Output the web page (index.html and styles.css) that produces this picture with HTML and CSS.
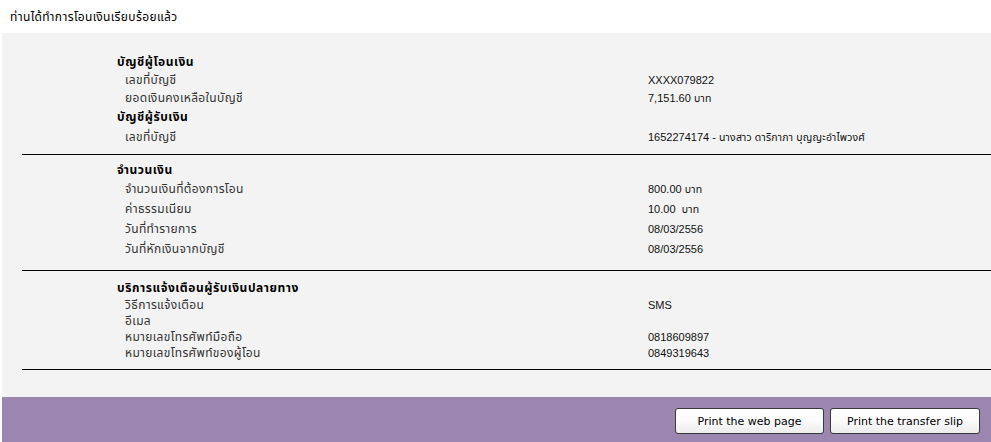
FILE: index.html
```html
<!DOCTYPE html>
<html lang="th">
<head>
<meta charset="utf-8">
<link rel="stylesheet" href="styles.css">
</head>
<body>
<div class="title">ท่านได้ทำการโอนเงินเรียบร้อยแล้ว</div>
<div class="panel">
  <section class="sec s1">
    <div class="row h18 head"><span class="lab">บัญชีผู้โอนเงิน</span></div>
    <div class="row h18"><span class="lab item">เลขที่บัญชี</span><span class="val">XXXX079822</span></div>
    <div class="row h18"><span class="lab item">ยอดเงินคงเหลือในบัญชี</span><span class="val">7,151.60 <span class="thai">บาท</span></span></div>
    <div class="row h20 head"><span class="lab">บัญชีผู้รับเงิน</span></div>
    <div class="row h20"><span class="lab item">เลขที่บัญชี</span><span class="val">1652274174 - <span class="thai">นางสาว ดาริกาภา บุญญะอำไพวงศ์</span></span></div>
  </section>
  <section class="sec s2">
    <div class="row h18 head"><span class="lab">จำนวนเงิน</span></div>
    <div class="row h20"><span class="lab item">จำนวนเงินที่ต้องการโอน</span><span class="val">800.00 <span class="thai">บาท</span></span></div>
    <div class="row h20"><span class="lab item">ค่าธรรมเนียม</span><span class="val">10.00&nbsp; <span class="thai">บาท</span></span></div>
    <div class="row h20"><span class="lab item">วันที่ทำรายการ</span><span class="val">08/03/2556</span></div>
    <div class="row h20"><span class="lab item">วันที่หักเงินจากบัญชี</span><span class="val">08/03/2556</span></div>
  </section>
  <section class="sec s3">
    <div class="row h17 head"><span class="lab">บริการแจ้งเตือนผู้รับเงินปลายทาง</span></div>
    <div class="row h17"><span class="lab item">วิธีการแจ้งเตือน</span><span class="val">SMS</span></div>
    <div class="row h16"><span class="lab item">อีเมล</span><span class="val"></span></div>
    <div class="row h16"><span class="lab item">หมายเลขโทรศัพท์มือถือ</span><span class="val">0818609897</span></div>
    <div class="row h16"><span class="lab item">หมายเลขโทรศัพท์ของผู้โอน</span><span class="val">0849319643</span></div>
  </section>
  <div class="spacer"></div>
</div>
<div class="footer">
  <button class="btn b1">Print the web page</button>
  <button class="btn b2">Print the transfer slip</button>
</div>
</body>
</html>
```
FILE: styles.css
```css
html, body {
  margin: 0;
  padding: 0;
  background: #ffffff;
  overflow: hidden;
}
body {
  width: 991px;
  height: 442px;
  font-family: Tahoma, "Liberation Sans", "Noto Sans Thai", sans-serif;
  font-size: 12px;
  color: #000;
}
.title {
  height: 33px;
  line-height: 35px;
  padding-left: 10px;
  font-size: 12px;
  letter-spacing: 0.37px;
  color: #000;
}
.panel {
  margin-left: 2px;
  background: #f3f3f3;
  height: 364px;
  display: flex;
  flex-direction: column;
}
.sec {
  margin-left: 20px;
  border-bottom: 1px solid #000;
  display: flex;
  flex-direction: column;
}
.s1 { padding-top: 20px; padding-bottom: 7px; }
.s2 { padding-top: 6px; padding-bottom: 11px; }
.s3 { padding-top: 8px; padding-bottom: 8px; }
.row {
  display: grid;
  grid-template-columns: 531px 1fr;
  align-items: center;
  padding-left: 95px;
}
.h16 { height: 16px; }
.h17 { height: 17px; }
.h18 { height: 18px; }
.h20 { height: 20px; }
.lab {
  white-space: nowrap;
  line-height: 16px;
}
.head .lab {
  font-weight: bold;
  letter-spacing: 0.55px;
  color: #000;
}
.lab.item {
  padding-left: 8px;
  letter-spacing: 0.35px;
  color: #333;
}
.val {
  font-family: "Liberation Sans", Arial, sans-serif;
  font-size: 11px;
  line-height: 16px;
  color: #111;
  white-space: nowrap;
}
.thai {
  font-family: Tahoma, "Noto Sans Thai", sans-serif;
  font-size: 10.5px;
  letter-spacing: 0.2px;
}
.footer {
  margin-left: 2px;
  height: 45px;
  background: #9b86b0;
  display: flex;
  justify-content: flex-end;
  align-items: center;
  gap: 6px;
  padding-right: 11px;
  padding-top: 3px;
  box-sizing: border-box;
}
.btn {
  height: 26px;
  border: 1px solid #3a3a3a;
  border-radius: 3px;
  background: linear-gradient(#ffffff 0%, #fbfbfb 50%, #ececec 100%);
  font-family: "DejaVu Sans", Verdana, sans-serif;
  font-size: 11px;
  color: #000;
  padding: 0;
  cursor: pointer;
}
.b1 { width: 149px; }
.b2 { width: 150px; }
```
